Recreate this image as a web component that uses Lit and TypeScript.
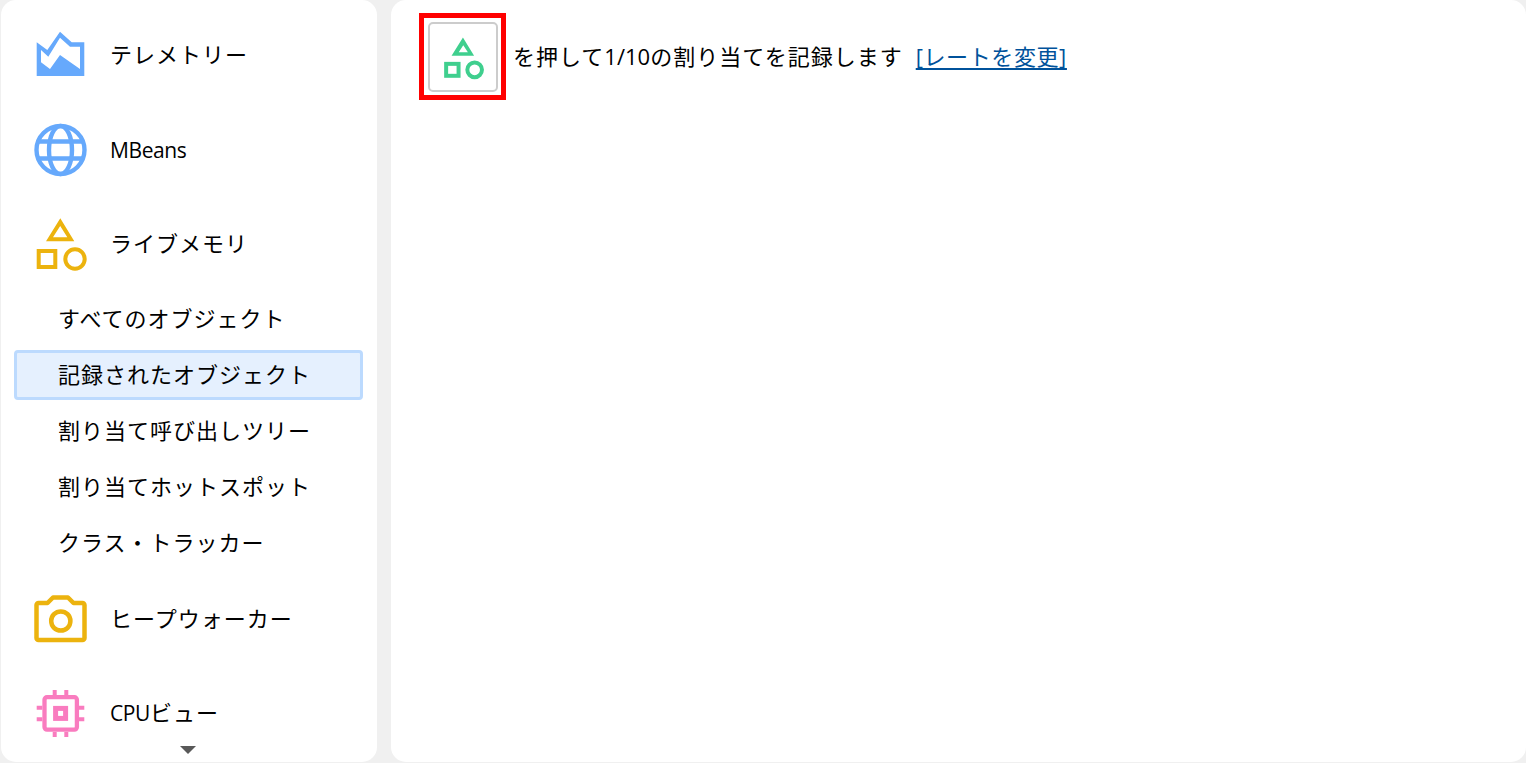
import { LitElement, html, css, svg } from "lit";
import { customElement } from "lit/decorators.js";

const liveShapes = svg`
  <path fill="#ecb30e" fill-rule="evenodd" d="M26.300 4.300L40.300 27.300H12zM26.200 12L19 23.300H33.300z"/>
  <rect x="4.700" y="37" width="16.600" height="16" fill="none" stroke="#ecb30e" stroke-width="4"/>
  <circle cx="41" cy="45" r="9.700" fill="none" stroke="#ecb30e" stroke-width="4"/>`;
const recShapes = svg`
  <path fill="#3fcf8e" fill-rule="evenodd" d="M26.300 4.300L40.300 27.300H12zM26.700 14.100L21 22.800H32.500z"/>
  <rect x="5.200" y="37.500" width="15.600" height="15" fill="none" stroke="#3fcf8e" stroke-width="5"/>
  <circle cx="41" cy="45" r="9.200" fill="none" stroke="#3fcf8e" stroke-width="5"/>`;

const telemetry = svg`<svg class="ic" viewBox="0 0 54 54"><path fill="#66a9fc" fill-rule="evenodd" d="M2.700 17.300L13.300 25 26 6.700 37.700 17.300H50.300V51H2.700zM7 25V37.300L16 44 26 30 46 44V21.700H36L26 12.700 14.300 31.700z"/></svg>`;
const globe = svg`<svg class="ic" viewBox="0 0 54 54"><g fill="none" stroke="#66a9fc" stroke-width="4.400"><circle cx="26.500" cy="28" r="24"/><ellipse cx="26.500" cy="28" rx="11.500" ry="24"/><path d="M3 19.500h47M3 36.500h47"/></g></svg>`;
const live = svg`<svg class="ic" viewBox="0 0 54 54">${liveShapes}</svg>`;
const camera = svg`<svg class="ic" viewBox="0 0 54 54"><g fill="none" stroke="#ecb30e" stroke-width="4.500" stroke-linejoin="round"><path d="M4.500 13H13.500L19 7.500H34L39.500 13H48.500a2 2 0 0 1 2 2V48a2 2 0 0 1-2 2H4.500a2 2 0 0 1-2-2V15a2 2 0 0 1 2-2z"/><circle cx="26.800" cy="31" r="9.600"/></g></svg>`;
const cpu = svg`<svg class="ic" viewBox="0 0 54 54"><g fill="none" stroke="#f97cbf" stroke-width="4"><rect x="10.500" y="14.200" width="32.400" height="32.400" rx="2.500" stroke-width="4.300"/><rect x="21.600" y="25.400" width="10" height="10" stroke-width="5"/><path d="M20.700 7v5M32.300 7v5M20.700 49v5M32.300 49v5M2.700 24.800h5.600M2.700 36.300h5.600M45 24.800h5.300M45 36.300h5.300"/></g></svg>`;

@customElement("app-root")
export class AppRoot extends LitElement {
  static styles = css`
    :host { display: block; height: 763px; background: #f0f0f0; overflow: hidden;
      font-family: "Open Sans", "Noto Sans CJK JP", sans-serif; color: #000; }
    .layout { display: grid; grid-template-columns: 376px 1135px; gap: 14px; height: 762px; padding-left: 1px; }
    .panel { background: #fff; border-radius: 15px; position: relative; overflow: hidden; }
    .side { padding-top: 5px; box-sizing: border-box; }
    .item { display: flex; align-items: center; height: 94px; padding-left: 33px; gap: 22px; font-size: 22px; letter-spacing: 1px; }
    .item.mb { margin-top: 3px; }
    .item.live { height: 90px; }
    .item.heap { margin-top: 1px; }
    .item.cp { height: 92px; }
    .ic { width: 54px; height: 54px; flex: none; overflow: visible; }
    .item .lbl { white-space: nowrap; margin-top: 2px; }
    .item.heap .lbl { margin-top: 0; }
    .lat { font-size: 21px; letter-spacing: -0.4px; }
    .subs { display: flex; flex-direction: column; margin-top: 3px; }
    .sub { height: 56px; display: flex; align-items: center; padding-left: 57px; font-size: 22px; letter-spacing: 1px; box-sizing: border-box; white-space: nowrap; }
    .sub.sel { margin: 5px 14px 1px 13px; height: 50px; padding: 0 0 5px 41px; background: #e5f0fe; border: 3px solid #bcdafe; border-radius: 4px; }
    .more { position: absolute; left: 179px; top: 746px; width: 0; height: 0;
      border-left: 8.500px solid transparent; border-right: 8.500px solid transparent; border-top: 8px solid #595959; }
    .main { padding: 13px 0 0 28px; }
    .bar { display: flex; align-items: center; font-size: 22px; letter-spacing: 1px; white-space: nowrap; }
    .mark { border: 5px solid #f00; padding: 4px 3px 3px 4px; box-sizing: border-box; width: 87px; height: 87px; margin-right: 7px; }
    .btn { width: 70px; height: 70px; box-sizing: border-box; border: 2px solid #ccc; border-radius: 5px; background: #fff;
      display: flex; align-items: center; justify-content: center; padding: 0; }
    .btn svg { width: 43px; height: 43px; margin-bottom: 4px; overflow: visible; }
    .txt { margin-bottom: 4px; }
    .num { letter-spacing: 0; }
    a { color: #00529b; margin: 0 0 4px 13px; letter-spacing: 0.6px; text-decoration: underline 2px; text-decoration-skip-ink: none; text-underline-offset: 3px; }
  `;

  render() {
    return html`<div class="layout">
      <nav class="panel side">
        <div class="item">${telemetry}<span class="lbl">テレメトリー</span></div>
        <div class="item mb">${globe}<span class="lbl lat">MBeans</span></div>
        <div class="item live">${live}<span class="lbl">ライブメモリ</span></div>
        <div class="subs">
          <div class="sub">すべてのオブジェクト</div>
          <div class="sub sel">記録されたオブジェクト</div>
          <div class="sub">割り当て呼び出しツリー</div>
          <div class="sub">割り当てホットスポット</div>
          <div class="sub">クラス・トラッカー</div>
        </div>
        <div class="item heap">${camera}<span class="lbl">ヒープウォーカー</span></div>
        <div class="item cp">${cpu}<span class="lbl"><span class="lat">CPU</span>ビュー</span></div>
        <div class="more"></div>
      </nav>
      <main class="panel main">
        <div class="bar">
          <div class="mark"><button class="btn"><svg viewBox="0 0 54 54">${recShapes}</svg></button></div>
          <span class="txt">を押して<span class="num">1/10</span>の割り当てを記録します</span>
          <a href="#">[レートを変更]</a>
        </div>
      </main>
    </div>`;
  }
}
